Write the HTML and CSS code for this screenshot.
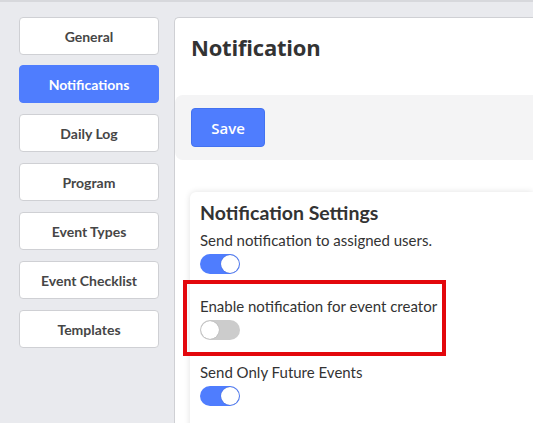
FILE: index.html
```html
<!DOCTYPE html>
<html>
<head>
<meta charset="utf-8">
<link rel="stylesheet" href="styles.css">
</head>
<body>
<div class="page">
  <nav class="sidebar">
    <div class="nav-btn">General</div>
    <div class="nav-btn active">Notifications</div>
    <div class="nav-btn">Daily Log</div>
    <div class="nav-btn">Program</div>
    <div class="nav-btn">Event Types</div>
    <div class="nav-btn">Event Checklist</div>
    <div class="nav-btn">Templates</div>
  </nav>
  <main class="panel">
    <h1 class="title">Notification</h1>
    <div class="toolbar">
      <button class="save">Save</button>
    </div>
    <section class="card">
      <h2 class="card-title">Notification Settings</h2>
      <div class="setting">
        <div class="label">Send notification to assigned users.</div>
        <span class="toggle on"></span>
      </div>
      <div class="setting highlighted">
        <div class="label">Enable notification for event creator</div>
        <span class="toggle"></span>
        <div class="highlight-box"></div>
      </div>
      <div class="setting">
        <div class="label">Send Only Future Events</div>
        <span class="toggle on"></span>
      </div>
    </section>
  </main>
</div>
</body>
</html>
```

FILE: styles.css
```css
* { box-sizing: border-box; }
html, body { margin: 0; padding: 0; }
body {
  background: #e9eaee;
  border-top: 2px solid #d7d8dc;
  height: 423px;
  overflow: hidden;
  font-family: "Lato", "Liberation Sans", sans-serif;
}
.page {
  display: flex;
  gap: 15px;
  padding: 15px 0 0 19px;
  height: 100%;
}
.sidebar {
  width: 140px;
  flex: none;
  display: flex;
  flex-direction: column;
  gap: 11px;
}
.nav-btn {
  height: 38px;
  background: #fff;
  border: 1px solid #cfd0d4;
  border-radius: 4px;
  display: flex;
  align-items: center;
  justify-content: center;
  font-size: 14px;
  font-weight: 700;
  color: #464646;
}
.nav-btn:first-child { margin-bottom: -1px; }
.nav-btn.active {
  background: #4f7dfe;
  border-color: #4f7dfe;
  color: #fff;
}
.panel {
  flex: 1;
  background: #fff;
  border: 1px solid #cfd0d4;
  border-right: none;
  border-bottom: none;
  border-radius: 5px 0 0 0;
  min-width: 0;
}
.title {
  margin: 0;
  padding: 14px 16px 0 16px;
  height: 77px;
  font-family: "Open Sans", "Liberation Sans", sans-serif;
  font-size: 22px;
  font-weight: 700;
  line-height: 30px;
  letter-spacing: -0.2px;
  color: #333;
}
.toolbar {
  background: #f4f4f5;
  border-radius: 8px 0 0 8px;
  height: 65px;
  padding: 13px 16px;
}
.save {
  width: 74px;
  height: 39px;
  background: #4f7dfe;
  border: 1px solid #4372f0;
  border-radius: 4px;
  color: #fff;
  font-family: "Open Sans", "Liberation Sans", sans-serif;
  font-size: 15px;
  font-weight: 600;
  padding: 0;
}
.card {
  margin: 32px 0 0 15px;
  background: #fff;
  border-radius: 6px 0 0 0;
  box-shadow: 0 0 6px rgba(0,0,0,0.12);
  padding: 10px 10px 20px 10px;
  height: 260px;
}
.card-title {
  margin: 0;
  font-size: 19.5px;
  font-weight: 700;
  line-height: 22px;
  color: #333;
}
.setting {
  position: relative;
  padding-top: 6px;
  height: 66px;
}
.label {
  font-size: 15px;
  line-height: 20px;
  color: #333;
}
.toggle {
  display: block;
  margin-top: 4px;
  width: 40px;
  height: 20px;
  border-radius: 10px;
  background: #ccc;
  position: relative;
}
.toggle::after {
  content: "";
  position: absolute;
  top: 1px;
  left: 1px;
  width: 18px;
  height: 18px;
  border-radius: 50%;
  background: #fff;
  box-shadow: 0 0 1px rgba(0,0,0,0.35);
}
.toggle.on { background: #4f7dfe; }
.toggle.on::after { left: 21px; }
.highlight-box {
  position: absolute;
  left: -17px;
  top: -10px;
  width: 263px;
  height: 76px;
  border: 4px solid #e3070c;
}
```
